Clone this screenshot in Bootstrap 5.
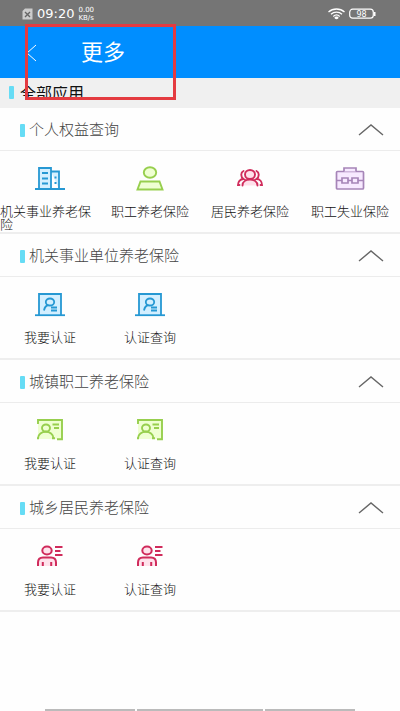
<!DOCTYPE html>
<html lang="zh-CN">
<head>
<meta charset="utf-8">
<meta name="viewport" content="width=device-width, initial-scale=1">
<title>更多</title>
<link href="https://cdn.jsdelivr.net/npm/bootstrap@5.3.0/dist/css/bootstrap.min.css" rel="stylesheet">
<style>
body{font-family:"Liberation Sans","Noto Sans CJK SC",sans-serif;background:#fefefe;color:#333}
.status{height:26px;background:#757575;color:#fff;font-family:"DejaVu Sans",sans-serif;padding:2px 24px 0 22px}
.clock{font-size:13px;line-height:16px}
.speed{font-size:7px;line-height:8px}
.topbar{height:52px;background:#008eff;color:#fff;padding:2px 0 0 24px}
.topbar h1{font-size:22px;line-height:28px;font-weight:400;margin-left:43px}
.all-apps{height:30px;background:#f0f0f0;padding:8px 0 0 9px}
.all-apps h2{font-size:16px;line-height:16px;height:11px;overflow:hidden;color:#111;padding-left:6px}
.tick{width:5px;height:13px;border-radius:1px;background:#66dcf5;flex:none}
.group-head{height:43px;border-bottom:1px solid #ececec;padding:2px 16px 0 20px}
.group-head h3{font-size:15px;line-height:20px;font-weight:300;color:#444;padding-left:4px}
.group-body{border-bottom:2px solid #eee;padding:12px 0 1px}
.app-link{color:#111;font-size:13px;line-height:13px;font-weight:300}
.app-link svg{width:30px;height:30px;margin-bottom:12px}
.app-label{min-height:26px;width:100%}
.app-label.short{text-align:center}
.c-blue{color:#2698d3}.c-green{color:#97cf4e}.c-red{color:#d02c5c}.c-purple{color:#a685b8}
.marker{left:25px;top:24px;width:151px;height:76px;border:3px solid #e43b40;pointer-events:none}
.homebar{padding:0 45px;gap:2px}
.homebar span{height:2px;background:#bbb;flex:18}
.homebar span.mid{flex:25}
</style>
<script src="https://cdn.jsdelivr.net/npm/bootstrap@5.3.0/dist/js/bootstrap.bundle.min.js"></script>
</head>
<body class="d-flex flex-column min-vh-100 position-relative">
<svg class="d-none" aria-hidden="true">
  <symbol id="i-up" viewBox="0 0 26 14"><path d="M1 12 13 2l12 10" fill="none" stroke="#666" stroke-width="1.4"/></symbol>
  <symbol id="i-build" viewBox="0 0 30 30"><g fill="#d3efff" stroke="currentColor" stroke-width="1.8"><path d="M4 26V5h12v21M16 8.500h8V26"/><path d="M0 26h30M7 10h6M7 15.500h6M7 20.500h6M19.500 14.500h2M19.500 20h2"/></g></symbol>
  <symbol id="i-person" viewBox="0 0 30 30"><g fill="#efffd2" stroke="currentColor" stroke-width="1.9"><ellipse cx="15" cy="9.500" rx="6.200" ry="5.300"/><path d="M5.500 18.500h19l3 8h-25z"/></g></symbol>
  <symbol id="i-group" viewBox="0 0 30 30"><g fill="none" stroke="currentColor" stroke-width="1.9" stroke-linecap="round"><path fill="#ffe0ea" d="M7.500 22.500c0-8 15-8 15 0"/><ellipse fill="#ffe0ea" cx="15" cy="11.500" rx="5" ry="4.500"/><path d="M8.500 8c-3 1.500-3 6 0 8-3.500 0-5.500 3-5.500 6h1.500M21.500 8c3 1.500 3 6 0 8 3.500 0 5.500 3 5.500 6h-1.500"/></g></symbol>
  <symbol id="i-case" viewBox="0 0 30 30"><g fill="#f7e9ff" stroke="currentColor" stroke-width="1.7"><rect x="1.500" y="8.500" width="27" height="17.500" rx="1"/><path d="M9 8.500V5h12v3.500M1.500 17.500H7M13 17.500h4M23 17.500h5.500"/><path d="M7 15h6v5H7zM17 15h6v5h-6z"/></g></symbol>
  <symbol id="i-laptop" viewBox="0 0 30 30"><g fill="none" stroke="currentColor" stroke-width="1.8"><path fill="#d3efff" d="M4 26V5h22v21"/><path d="M0 26.200h30"/><ellipse cx="15" cy="13" rx="4.200" ry="3.500"/><path d="M9 21.500c.5-3 2-5 4.500-5.500M16 18.500h6M16 21.500h6"/></g></symbol>
  <symbol id="i-card" viewBox="0 0 30 30"><path fill="#efffd2" d="M3 5h24v19H3z"/><g fill="none" stroke="currentColor" stroke-width="1.9"><path d="M3 9V5h24v19.200h-5M17.500 9.500h6.500M19 13h5"/><ellipse cx="11" cy="13" rx="4" ry="3.500"/><path d="M3 23.500c0-9 15.500-9 15.500 0M2 23.300h2M17 23.300h3"/></g></symbol>
  <symbol id="i-user" viewBox="0 0 30 30"><g fill="none" stroke="currentColor" stroke-width="2"><path fill="#ffe3ec" d="M3 25v-3.500c0-3 2-5 5-5h8c3 0 5 2 5 5V25"/><ellipse fill="#ffe3ec" cx="12" cy="9.500" rx="4.700" ry="4"/><path d="M7.800 25v-4M16.200 25v-4M20 6h7.500M20 10h5.500M20 14h7.500"/></g></symbol>
</svg>

<div class="status d-flex align-items-center justify-content-between">
  <div class="d-flex align-items-center">
    <svg width="11" height="12" viewBox="0 0 11 12"><path d="M3 .500h7.500v11H.500V3z" fill="#ccc"/><path d="m3 4 5 5m0-5L3 9" stroke="#666" stroke-width="1.400"/></svg>
    <span class="clock ms-1">09:20</span>
    <span class="speed ms-1">0.00<br>KB/s</span>
  </div>
  <div class="d-flex align-items-center gap-1">
    <svg width="17" height="12" viewBox="0 0 17 12"><g fill="none" stroke="#fff" stroke-width="1.300"><path d="M.500 4c4.500-4 11.500-4 16 0M3 6.300c3-3 8-3 11 0M5.300 8.500c2-2 4.400-2 6.400 0"/></g><ellipse cx="8.500" cy="9.800" rx="2" ry="1.400" fill="#fff"/></svg>
    <svg width="27" height="12" viewBox="0 0 27 12"><rect x=".700" y="1.200" width="23.600" height="9" rx="3" fill="none" stroke="#fff" stroke-width="1.200"/><path d="M25 4h1.500v4H25z" fill="#fff"/><text x="12.500" y="8.600" font-size="8" text-anchor="middle" fill="#fff">98</text></svg>
  </div>
</div>

<header class="topbar d-flex align-items-center">
  <button class="btn p-0 border-0 d-flex" type="button" aria-label="返回"><svg width="14" height="18" viewBox="0 0 14 18"><path d="M12 1 3 9l9 8" fill="none" stroke="#fff"/></svg></button>
  <h1 class="mb-0">更多</h1>
</header>

<main>
  <div class="all-apps d-flex align-items-start"><span class="tick"></span><h2 class="mb-0 fw-normal">全部应用</h2></div>

  <section>
    <div class="group-head d-flex align-items-center"><span class="tick"></span><h3 class="mb-0">个人权益查询</h3><button class="btn p-0 border-0 d-flex ms-auto" type="button" aria-label="收起"><svg width="26" height="14"><use href="#i-up"/></svg></button></div>
    <div class="group-body row g-0">
      <a class="app-link col-3 d-flex flex-column align-items-center text-decoration-none" href="#"><svg class="c-blue"><use href="#i-build"/></svg><span class="app-label">机关事业养老保险</span></a>
      <a class="app-link col-3 d-flex flex-column align-items-center text-decoration-none" href="#"><svg class="c-green"><use href="#i-person"/></svg><span class="app-label short">职工养老保险</span></a>
      <a class="app-link col-3 d-flex flex-column align-items-center text-decoration-none" href="#"><svg class="c-red"><use href="#i-group"/></svg><span class="app-label short">居民养老保险</span></a>
      <a class="app-link col-3 d-flex flex-column align-items-center text-decoration-none" href="#"><svg class="c-purple"><use href="#i-case"/></svg><span class="app-label short">职工失业保险</span></a>
    </div>
  </section>

  <section>
    <div class="group-head d-flex align-items-center"><span class="tick"></span><h3 class="mb-0">机关事业单位养老保险</h3><button class="btn p-0 border-0 d-flex ms-auto" type="button" aria-label="收起"><svg width="26" height="14"><use href="#i-up"/></svg></button></div>
    <div class="group-body row g-0">
      <a class="app-link col-3 d-flex flex-column align-items-center text-decoration-none" href="#"><svg class="c-blue"><use href="#i-laptop"/></svg><span class="app-label short">我要认证</span></a>
      <a class="app-link col-3 d-flex flex-column align-items-center text-decoration-none" href="#"><svg class="c-blue"><use href="#i-laptop"/></svg><span class="app-label short">认证查询</span></a>
    </div>
  </section>

  <section>
    <div class="group-head d-flex align-items-center"><span class="tick"></span><h3 class="mb-0">城镇职工养老保险</h3><button class="btn p-0 border-0 d-flex ms-auto" type="button" aria-label="收起"><svg width="26" height="14"><use href="#i-up"/></svg></button></div>
    <div class="group-body row g-0">
      <a class="app-link col-3 d-flex flex-column align-items-center text-decoration-none" href="#"><svg class="c-green"><use href="#i-card"/></svg><span class="app-label short">我要认证</span></a>
      <a class="app-link col-3 d-flex flex-column align-items-center text-decoration-none" href="#"><svg class="c-green"><use href="#i-card"/></svg><span class="app-label short">认证查询</span></a>
    </div>
  </section>

  <section>
    <div class="group-head d-flex align-items-center"><span class="tick"></span><h3 class="mb-0">城乡居民养老保险</h3><button class="btn p-0 border-0 d-flex ms-auto" type="button" aria-label="收起"><svg width="26" height="14"><use href="#i-up"/></svg></button></div>
    <div class="group-body row g-0">
      <a class="app-link col-3 d-flex flex-column align-items-center text-decoration-none" href="#"><svg class="c-red"><use href="#i-user"/></svg><span class="app-label short">我要认证</span></a>
      <a class="app-link col-3 d-flex flex-column align-items-center text-decoration-none" href="#"><svg class="c-red"><use href="#i-user"/></svg><span class="app-label short">认证查询</span></a>
    </div>
  </section>
</main>

<div class="homebar d-flex mt-auto"><span></span><span class="mid"></span><span></span></div>
<div class="marker position-absolute"></div>
</body>
</html>
